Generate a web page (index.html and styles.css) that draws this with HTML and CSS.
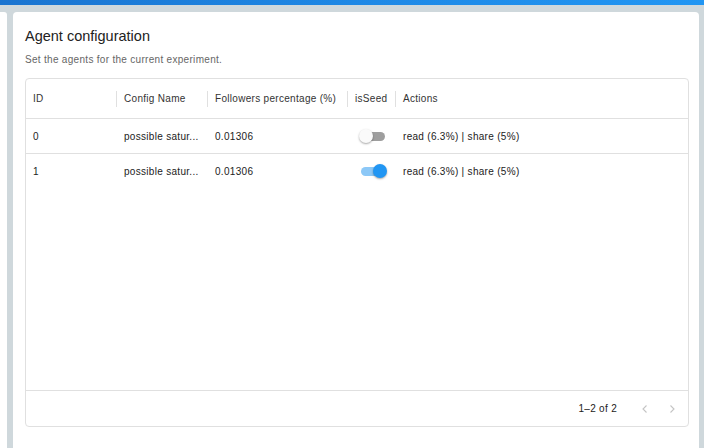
FILE: index.html
```html
<!DOCTYPE html>
<html>
<head>
<meta charset="utf-8">
<link rel="stylesheet" href="styles.css">
</head>
<body>
<div class="topbar"></div>
<div class="main">
  <div class="sidepanel"></div>
  <div class="card">
    <h1 class="title">Agent configuration</h1>
    <p class="subtitle">Set the agents for the current experiment.</p>
    <div class="grid">
      <div class="row head">
        <div class="cell sep">ID</div>
        <div class="cell sep">Config Name</div>
        <div class="cell sep">Followers percentage (%)</div>
        <div class="cell sep">isSeed</div>
        <div class="cell">Actions</div>
      </div>
      <div class="row body-row">
        <div class="cell">0</div>
        <div class="cell">possible satur...</div>
        <div class="cell">0.01306</div>
        <div class="cell center"><span class="switch"><span class="track"></span><span class="thumb"></span></span></div>
        <div class="cell">read (6.3%) | share (5%)</div>
      </div>
      <div class="row body-row">
        <div class="cell">1</div>
        <div class="cell">possible satur...</div>
        <div class="cell">0.01306</div>
        <div class="cell center"><span class="switch on"><span class="track"></span><span class="thumb"></span></span></div>
        <div class="cell">read (6.3%) | share (5%)</div>
      </div>
      <div class="filler"></div>
      <div class="footer">
        <span class="count">1–2 of 2</span>
        <span class="chev"><svg width="10" height="10" viewBox="0 0 10 10"><path d="M6.5 1.5 L3 5 L6.5 8.5" fill="none" stroke="#c4c4c4" stroke-width="1.1"/></svg></span>
        <span class="chev"><svg width="10" height="10" viewBox="0 0 10 10"><path d="M3.5 1.5 L7 5 L3.5 8.5" fill="none" stroke="#c4c4c4" stroke-width="1.1"/></svg></span>
      </div>
    </div>
  </div>
</div>
</body>
</html>
```

FILE: styles.css
```css
html, body {
  margin: 0;
  padding: 0;
  height: 448px;
  overflow: hidden;
  background: #cfd8dc;
  font-family: "Liberation Sans", Arial, sans-serif;
  color: #222;
}
.topbar {
  height: 5px;
  background: linear-gradient(90deg, #1a74d0 0%, #1e88e5 50%, #2196f3 100%);
}
.main {
  display: flex;
  gap: 6px;
  padding-top: 7px;
  padding-right: 5px;
  height: 500px;
}
.sidepanel {
  width: 7px;
  background: #fff;
  border-radius: 0 3px 0 0;
}
.card {
  flex: 1;
  background: #fff;
  border-radius: 4px;
  padding: 14px 10px 0 12px;
  display: flex;
  flex-direction: column;
}
.title {
  margin: 0;
  font-size: 14.5px;
  font-weight: normal;
  line-height: 20px;
  color: #222;
}
.subtitle {
  margin: 8px 0 0;
  font-size: 10px;
  line-height: 12px;
  color: #666;
  letter-spacing: 0.3px;
}
.grid {
  margin-top: 12px;
  height: 349px;
  box-sizing: border-box;
  border: 1px solid #e0e0e0;
  border-radius: 4px;
  display: flex;
  flex-direction: column;
  font-size: 10px;
  letter-spacing: 0.3px;
}
.row {
  display: grid;
  grid-template-columns: 91px 91px 140px 48px 1fr;
  align-items: center;
}
.row.head {
  height: 39px;
  color: #333;
}
.body-row {
  height: 35px;
  box-sizing: border-box;
  border-top: 1px solid #e0e0e0;
}
.cell {
  padding-left: 7px;
  position: relative;
  white-space: nowrap;
  overflow: hidden;
}
.cell.sep {
  overflow: visible;
}
.cell.sep::after {
  content: "";
  position: absolute;
  right: 0;
  top: -2px;
  width: 1px;
  height: 16px;
  background: #e0e0e0;
}
.cell.center {
  padding-left: 11px;
  display: flex;
  overflow: visible;
}
.switch {
  position: relative;
  width: 28px;
  height: 14px;
  display: inline-block;
}
.track {
  position: absolute;
  left: 2px;
  right: 2px;
  top: 2.5px;
  height: 9px;
  border-radius: 5px;
  background: #9e9e9e;
}
.thumb {
  position: absolute;
  left: 0;
  top: 0;
  width: 14px;
  height: 14px;
  border-radius: 50%;
  background: #fafafa;
  box-shadow: 0 1px 2px rgba(0,0,0,0.35);
}
.switch.on .track {
  background: #8cc8f7;
}
.switch.on .thumb {
  left: 14px;
  background: #2196f3;
}
.filler {
  flex: 1;
  border-bottom: 1px solid #e0e0e0;
}
.footer {
  height: 35px;
  display: flex;
  align-items: center;
  justify-content: flex-end;
  padding-right: 3px;
  color: #222;
}
.count {
  margin-right: 14px;
}
.chev {
  width: 27px;
  display: flex;
  justify-content: center;
}
```
